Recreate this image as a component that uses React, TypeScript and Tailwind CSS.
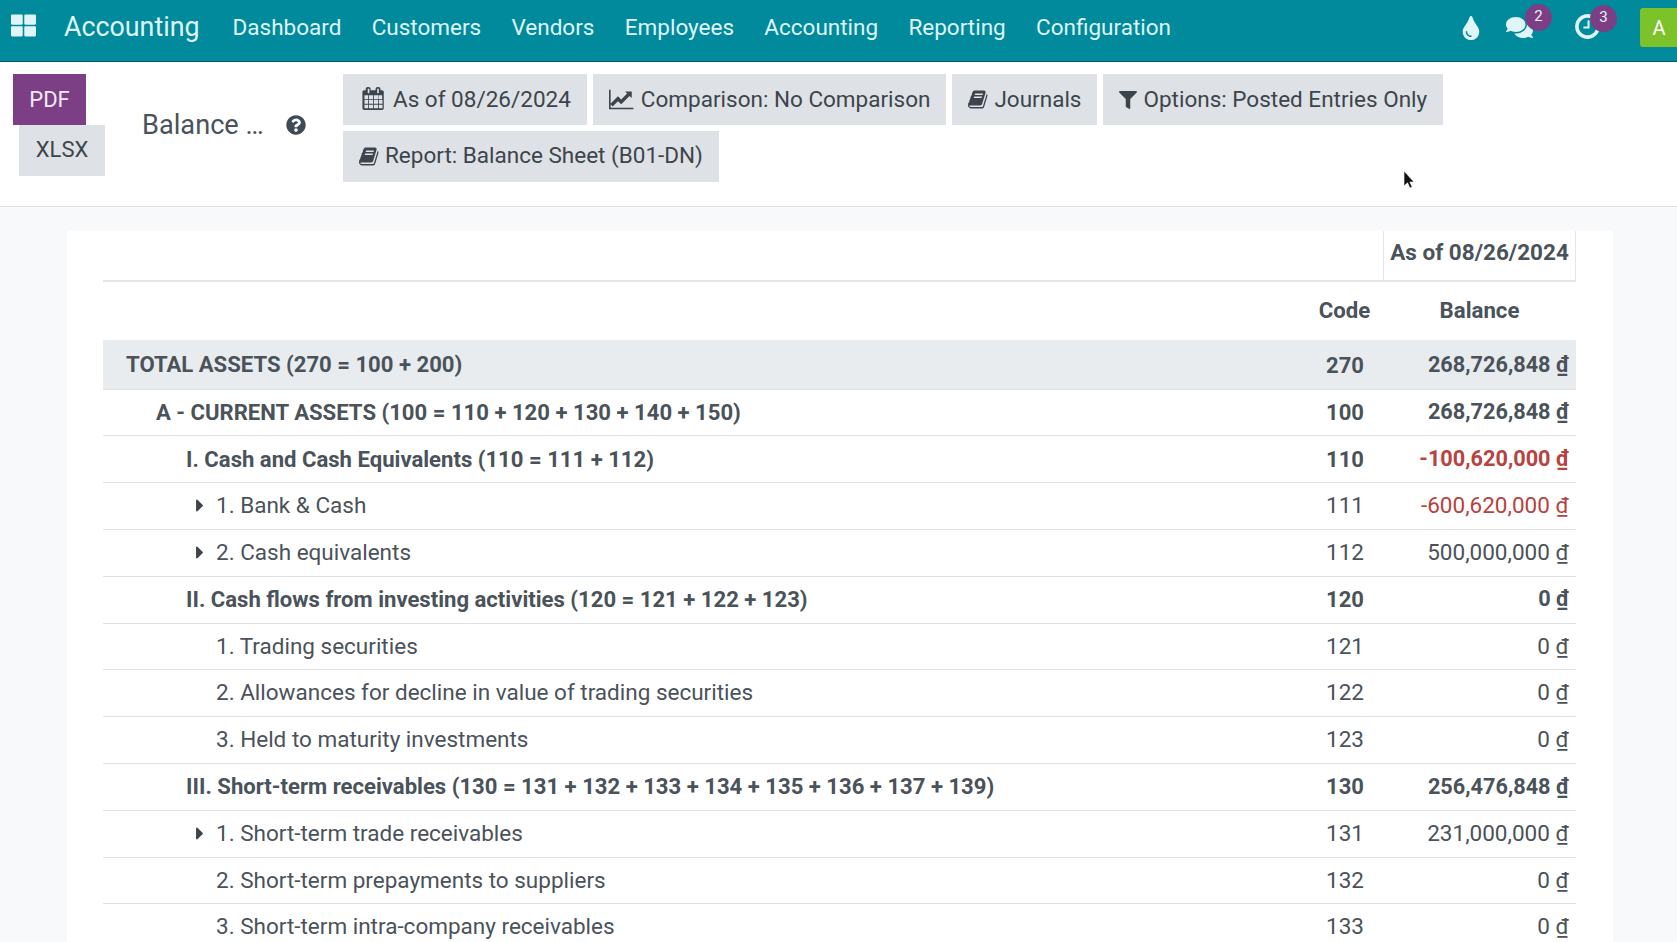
import { FaComments, FaFilter, FaQuestionCircle, FaThLarge, FaTint, FaCaretRight } from "react-icons/fa";

const NAV = ["Dashboard", "Customers", "Vendors", "Employees", "Accounting", "Reporting", "Configuration"];

type Row = { label: string; code: string; amount: string; level: number; bold?: boolean; caret?: boolean; total?: boolean };

const ROWS: Row[] = [
  { label: "TOTAL ASSETS (270 = 100 + 200)", code: "270", amount: "268,726,848", level: 0, bold: true, total: true },
  { label: "A - CURRENT ASSETS (100 = 110 + 120 + 130 + 140 + 150)", code: "100", amount: "268,726,848", level: 1, bold: true },
  { label: "I. Cash and Cash Equivalents (110 = 111 + 112)", code: "110", amount: "-100,620,000", level: 2, bold: true },
  { label: "1. Bank & Cash", code: "111", amount: "-600,620,000", level: 3, caret: true },
  { label: "2. Cash equivalents", code: "112", amount: "500,000,000", level: 3, caret: true },
  { label: "II. Cash flows from investing activities (120 = 121 + 122 + 123)", code: "120", amount: "0", level: 2, bold: true },
  { label: "1. Trading securities", code: "121", amount: "0", level: 3 },
  { label: "2. Allowances for decline in value of trading securities", code: "122", amount: "0", level: 3 },
  { label: "3. Held to maturity investments", code: "123", amount: "0", level: 3 },
  { label: "III. Short-term receivables (130 = 131 + 132 + 133 + 134 + 135 + 136 + 137 + 139)", code: "130", amount: "256,476,848", level: 2, bold: true },
  { label: "1. Short-term trade receivables", code: "131", amount: "231,000,000", level: 3, caret: true },
  { label: "2. Short-term prepayments to suppliers", code: "132", amount: "0", level: 3 },
  { label: "3. Short-term intra-company receivables", code: "133", amount: "0", level: 3 },
];

const INDENT = ["pl-[23px]", "pl-[53px]", "pl-[83px]", "pl-[113px]"];

function BookIcon() {
  return (
    <svg viewBox="0 0 1792 1792" className="h-[21px] w-[21px] fill-current" aria-hidden>
      <path d="M1639 478q40 57 18 129l-275 906q-19 64-76.5 107.5t-122.5 43.5h-923q-77 0-148.5-53.5t-99.5-131.5q-24-67-2-127 0-4 3-27t4-37q1-8-3-21.5t-3-19.5q2-11 8-21t16.5-23.5 16.5-23.5q23-38 45-91.5t30-91.5q3-10 .5-30t-.5-28q3-11 17-28t17-23q21-36 42-92t25-90q1-9-2.5-32t.5-28q4-13 22-30.5t22-22.5q19-26 42.5-84.5t27.5-96.5q1-8-3-25.5t-2-26.5q2-8 9-18t18-23 17-21q8-12 16.5-30.5t15-35 16-36 19.5-32 26.5-23.5 36-11.5 47.5 5.5l-1 3q38-9 51-9h761q74 0 114 56t18 130l-274 906q-36 119-71.5 153.5t-128.5 34.5h-869q-27 0-38 15-11 16-1 43 24 70 144 70h923q29 0 56-15.5t35-41.5l300-987q7-22 5-57 38 15 59 43zm-1064 2q-4 13 2 22.5t20 9.5h608q13 0 25.5-9.5t16.5-22.5l21-64q4-13-2-22.5t-20-9.5h-608q-13 0-25.5 9.5t-16.5 22.5zm-83 256q-4 13 2 22.5t20 9.5h608q13 0 25.5-9.5t16.5-22.5l21-64q4-13-2-22.5t-20-9.5h-608q-13 0-25.5 9.5t-16.5 22.5z" />
    </svg>
  );
}

function CalendarIcon() {
  return (
    <svg viewBox="0 0 1792 1792" className="ml-[3px] h-[23px] w-[23px] -translate-y-[1px] fill-current" aria-hidden>
      <path d="M192 1664h288v-288h-288v288zm352 0h320v-288h-320v288zm-352-352h288v-320h-288v320zm352 0h320v-320h-320v320zm-352-384h288v-288h-288v288zm736 736h320v-288h-320v288zm-384-736h320v-288h-320v288zm768 736h288v-288h-288v288zm-384-352h320v-320h-320v320zm-352-864v-288q0-13-9.5-22.5t-22.5-9.5h-64q-13 0-22.5 9.5t-9.5 22.5v288q0 13 9.5 22.5t22.5 9.5h64q13 0 22.5-9.5t9.5-22.5zm736 864h288v-320h-288v320zm-384-384h320v-288h-320v288zm352 0h288v-288h-288v288zm32-480v-288q0-13-9.5-22.5t-22.5-9.5h-64q-13 0-22.5 9.5t-9.5 22.5v288q0 13 9.5 22.5t22.5 9.5h64q13 0 22.5-9.5t9.5-22.5zm384-64v1280q0 52-38 90t-90 38h-1408q-52 0-90-38t-38-90v-1280q0-52 38-90t90-38h128v-96q0-66 47-113t113-47h64q66 0 113 47t47 113v96h384v-96q0-66 47-113t113-47h64q66 0 113 47t47 113v96h128q52 0 90 38t38 90z" />
    </svg>
  );
}

function LineChartIcon() {
  return (
    <svg viewBox="0 0 2048 1792" className="h-[23px] w-[26px] fill-current" aria-hidden>
      <path d="M1920 1536v128h-1920v-1536h128v1408h1792zm-128-1248v435q0 21-19.5 29.5t-35.5-7.5l-121-121-633 633q-10 10-23 10t-23-10l-233-233-416 416-192-192 585-585q10-10 23-10t23 10l233 233 464-464-121-121q-16-16-7.5-35.5t29.5-19.5h435q14 0 23 9t9 23z" />
    </svg>
  );
}

function ClockIcon() {
  return (
    <svg viewBox="0 0 1792 1792" className="-ml-[2px] -mt-[2px] h-[29px] w-[29px] fill-current" aria-hidden>
      <path d="M1024 544v448q0 14-9 23t-23 9h-320q-14 0-23-9t-9-23v-64q0-14 9-23t23-9h224v-352q0-14 9-23t23-9h64q14 0 23 9t9 23zm416 352q0-148-73-273t-198-198-273-73-273 73-198 198-73 273 73 273 198 198 273 73 273-73 198-198 73-273zm224 0q0 209-103 385.5t-279.5 279.5-385.5 103-385.5-103-279.5-279.5-103-385.5 103-385.5 279.5-279.5 385.5-103 385.5 103 279.5 279.5 103 385.5z" />
    </svg>
  );
}

function Badge({ n, className }: { n: number; className: string }) {
  return (
    <span className={`absolute flex h-[27px] w-[27px] items-center justify-center rounded-full bg-[#7c3f85] pb-[2px] text-[15px] text-[#e6f6f8] ${className}`}>
      {n}
    </span>
  );
}

function ToolButton({ children, className = "gap-[5px]" }: { children: React.ReactNode; className?: string }) {
  return (
    <button className={`flex h-[51px] items-center bg-[#dee2e6] pl-[16px] pr-[16px] text-[22.5px] text-[#3d444b] ${className}`}>
      {children}
    </button>
  );
}

export default function App() {
  return (
    <div className="relative h-[942px] w-full overflow-hidden bg-[#f8f9fa] font-['Roboto',sans-serif] text-[#4a525a]">
      <nav className="flex h-[62px] items-center border-b border-[#015b66] bg-[#018a9b] pb-[6px] text-[#dff5f7]">
        <FaThLarge className="ml-[11px] h-[25px] w-[25px] -translate-y-[2px]" />
        <span className="ml-[28px] text-[26.8px]">Accounting</span>
        <div className="ml-[18px] flex gap-[0.3px]">
          {NAV.map((item) => (
            <a key={item} className="px-[15px] text-[22.5px]">
              {item}
            </a>
          ))}
        </div>
        <div className="ml-auto flex items-center">
          <FaTint className="h-[24px] w-[24px]" />
          <span className="relative ml-[23px] block h-[27px] w-[27px]">
            <FaComments className="h-[27px] w-[27px]" />
            <Badge n={2} className="left-[19px] top-[-10px]" />
          </span>
          <span className="relative ml-[42px] block h-[25px] w-[25px] -translate-y-[1px]">
            <ClockIcon />
            <Badge n={3} className="left-[15px] top-[-9px]" />
          </span>
          <span className="ml-[40px] flex h-[39px] w-[37px] items-center justify-center rounded-l-[3px] bg-[#7cc22b] pl-[1px] text-[20px] text-white">
            A
          </span>
        </div>
      </nav>

      <header className="flex h-[145px] border-b border-[#dee2e6] bg-white pt-[12px]">
        <div className="ml-[13px] w-[92px]">
          <button className="flex h-[51px] w-[73px] items-center justify-center bg-[#7c3f85] text-[22px] text-[#f3e9f5]">PDF</button>
          <button className="ml-[6px] flex h-[51px] w-[86px] items-center justify-center bg-[#dee2e6] pb-[2px] text-[22px] text-[#3d444b]">XLSX</button>
        </div>
        <div className="ml-[37px] flex h-[102px] w-[201px] items-center">
          <span className="text-[27.2px]">Balance …</span>
          <FaQuestionCircle className="ml-[22px] h-[20px] w-[20px] text-[#3f4a57]" />
        </div>
        <div className="flex w-[1200px] flex-wrap content-start gap-[6px]">
          <ToolButton className="gap-[8px]">
            <CalendarIcon />
            As of 08/26/2024
          </ToolButton>
          <ToolButton className="gap-[6px]">
            <LineChartIcon />
            Comparison: No Comparison
          </ToolButton>
          <ToolButton>
            <BookIcon />
            Journals
          </ToolButton>
          <ToolButton className="gap-[6px]">
            <FaFilter className="h-[18px] w-[18px]" />
            Options: Posted Entries Only
          </ToolButton>
          <ToolButton className="gap-[5px] pb-[1px]">
            <BookIcon />
            Report: Balance Sheet (B01-DN)
          </ToolButton>
        </div>
      </header>

      <main className="ml-[67px] mt-[24px] w-[1546px] bg-white px-[36px]">
        <table className="w-[1473px] table-fixed border-collapse text-[22.5px]">
          <colgroup>
            <col />
            <col className="w-[84px]" />
            <col className="w-[192px]" />
          </colgroup>
          <thead className="text-[22.2px]">
            <tr className="h-[50px] border-b-2 border-[#e5e6e8]">
              <th colSpan={2} />
              <th className="border-x border-[#e5e6e8] pb-[6px] text-center text-[22.5px] font-bold">As of 08/26/2024</th>
            </tr>
            <tr className="h-[58.5px]">
              <th />
              <th className="pl-[6px] text-center font-bold">Code</th>
              <th className="text-center font-bold">Balance</th>
            </tr>
          </thead>
          <tbody>
            {ROWS.map((row) => (
              <tr
                key={row.code}
                className={`border-b border-[#dee2e6] ${row.total ? "h-[49.6px] bg-[#e9ecef]" : "h-[46.8px]"} ${row.bold ? "font-bold" : ""}`}
              >
                <td className={`relative ${INDENT[row.level]} ${row.total ? "pt-[2px]" : ""} ${row.bold ? "text-[22.1px]" : ""}`}>
                  {row.caret && <FaCaretRight className="absolute left-[93px] top-[12px] h-[21px] w-[8px] text-[#3d444b]" />}
                  {row.label}
                </td>
                <td className={`pl-[7px] text-center ${row.total ? "pt-[2px]" : ""} ${row.bold ? "text-[22px]" : ""}`}>{row.code}</td>
                <td className={`pr-[7px] text-right ${row.total ? "pt-[2px]" : ""} ${row.bold ? "text-[21.7px]" : ""} ${row.amount.startsWith("-") ? "text-[#b8423e]" : ""}`}>
                  {row.amount} <span className="underline">₫</span>
                </td>
              </tr>
            ))}
          </tbody>
        </table>
      </main>

      <svg viewBox="0 0 12 18" className="absolute left-[1403px] top-[171px] h-[18px] w-[12px]" aria-hidden>
        <path d="M1 0v15l3.5-3.2L7 17l2.2-1-2.4-5H11z" fill="#111" stroke="#fff" strokeWidth="0.6" />
      </svg>
    </div>
  );
}
